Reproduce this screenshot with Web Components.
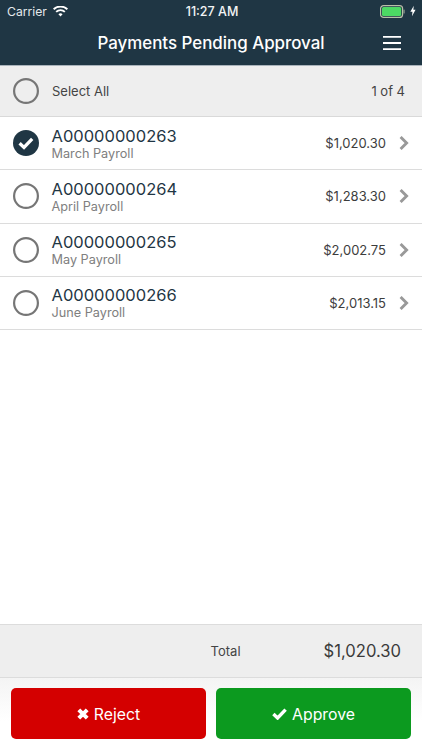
<!DOCTYPE html>
<html>
<head>
<meta charset="utf-8">
<title>Payments Pending Approval</title>
<style>
  html, body { margin: 0; height: 100%; background: #fff; }
  body { font-family: Inter, "Liberation Sans", sans-serif; overflow: hidden; }
  #app { display: flex; flex-direction: column; width: 422px; height: 750px; }
</style>
</head>
<body>
<div id="app">
  <app-header title="Payments Pending Approval"></app-header>
  <select-bar count="1 of 4"></select-bar>
  <payment-list>
    <payment-row code="A00000000263" label="March Payroll" amount="$1,020.30" checked></payment-row>
    <payment-row code="A00000000264" label="April Payroll" amount="$1,283.30"></payment-row>
    <payment-row code="A00000000265" label="May Payroll" amount="$2,002.75"></payment-row>
    <payment-row code="A00000000266" label="June Payroll" amount="$2,013.15"></payment-row>
  </payment-list>
  <total-bar amount="$1,020.30"></total-bar>
  <action-bar></action-bar>
</div>
<script>
class RoundCheck extends HTMLElement {
  constructor() {
    super();
    this.attachShadow({ mode: "open" });
    const on = this.hasAttribute("checked");
    this.shadowRoot.innerHTML = `
      <style>
        :host { display: block; width: 26px; height: 26px; flex: none; }
        svg { display: block; }
      </style>
      <svg width="26" height="26" viewBox="0 0 26 26">
        ${on
          ? `<circle cx="13" cy="13" r="13" fill="#1f3644"/><path d="M6.6 13.2l4.4 4.2 8.2-8.6" fill="none" stroke="#fff" stroke-width="3.3"/>`
          : `<circle cx="13" cy="13" r="11.9" fill="none" stroke="#767676" stroke-width="2.2"/>`}
      </svg>`;
  }
}

class AppHeader extends HTMLElement {
  constructor() {
    super();
    this.attachShadow({ mode: "open" });
    this.shadowRoot.innerHTML = `
      <style>
        :host { display: block; flex: none; height: 65px; background: #1f3644; color: #fff; border-bottom: 1px solid #a9b3bb; }
        .status { display: grid; grid-template-columns: 1fr auto 1fr; align-items: center; height: 22px; padding: 0 6px 0 7px; font-size: 12.2px; color: #e4e9ec; }
        .left { display: flex; align-items: center; gap: 6px; }
        .time { font-weight: 500; color: #f2f4f5; font-size: 12.5px; padding-left: 1px; }
        .right { display: flex; justify-content: flex-end; align-items: center; gap: 5px; }
        .nav { display: flex; justify-content: center; align-items: center; height: 42px; position: relative; }
        h1 { margin: 0; font-size: 16.9px; font-weight: 500; color: #fff; }
        .menu { position: absolute; right: 21px; top: 14px; }
        svg { display: block; }
      </style>
      <div class="status">
        <div class="left">
          <span>Carrier</span>
          <svg width="15" height="11" viewBox="0 0 15 11">
            <path d="M7.5 10.6L5.4 8.3a3 3 0 0 1 4.2 0zM3.8 6.6L2.5 5.2a7.2 7.2 0 0 1 10 0L11.2 6.6a5.3 5.3 0 0 0-7.4 0zM1.3 4L0 2.6a10.8 10.8 0 0 1 15 0L13.7 4a9 9 0 0 0-12.4 0z" fill="#fff"/>
          </svg>
        </div>
        <span class="time">11:27 AM</span>
        <div class="right">
          <svg width="25" height="13" viewBox="0 0 25 13">
            <rect x="0.6" y="0.6" width="22" height="11.8" rx="3" fill="none" stroke="#b9c0a8" stroke-width="1.2"/>
            <rect x="2" y="2" width="19.2" height="9" rx="1.6" fill="#4cd964"/>
            <rect x="23.4" y="4.5" width="1.3" height="4" rx="0.6" fill="#8b9a8f"/>
          </svg>
          <svg width="6" height="12" viewBox="0 0 7 12"><path d="M4.4 0L0.4 7h2.5L2.3 12l4.2-7.4H3.9z" fill="#fff"/></svg>
        </div>
      </div>
      <div class="nav">
        <h1>${this.getAttribute("title")}</h1>
        <svg class="menu" width="18" height="15" viewBox="0 0 18 15">
          <path d="M0 .8h18M0 7h18M0 13.2h18" stroke="#fff" stroke-width="1.8"/>
        </svg>
      </div>`;
  }
}

class SelectBar extends HTMLElement {
  constructor() {
    super();
    this.attachShadow({ mode: "open" });
    this.shadowRoot.innerHTML = `
      <style>
        :host { display: flex; flex: none; align-items: center; gap: 13px; height: 50px; padding: 0 17px 0 13px; background: #eeeeee; border-bottom: 1px solid #d9d9d9; font-size: 13px; color: #444; }
        .count { margin-left: auto; }
      </style>
      <round-check></round-check>
      <span>Select All</span>
      <span class="count">${this.getAttribute("count")}</span>`;
  }
}

class PaymentList extends HTMLElement {
  constructor() {
    super();
    this.attachShadow({ mode: "open" });
    this.shadowRoot.innerHTML = `
      <style>:host { display: block; flex: 1; background: #fff; }</style>
      <slot></slot>`;
  }
}

class PaymentRow extends HTMLElement {
  constructor() {
    super();
    this.attachShadow({ mode: "open" });
    const a = (n) => this.getAttribute(n);
    this.shadowRoot.innerHTML = `
      <style>
        :host { display: flex; align-items: center; height: 52.25px; padding: 0 13px; border-bottom: 1px solid #dcdcdc; background: #fff; }
        .text { flex: 1; display: flex; flex-direction: column; margin-left: 12.5px; }
        .code { font-size: 16.5px; line-height: 20px; color: #1f3644; }
        .label { font-size: 12.7px; line-height: 15px; color: #808080; }
        .amount { font-size: 13px; color: #3d3d3d; margin-right: 13px; }
        svg { display: block; flex: none; }
      </style>
      <round-check ${this.hasAttribute("checked") ? "checked" : ""}></round-check>
      <div class="text">
        <span class="code">${a("code")}</span>
        <span class="label">${a("label")}</span>
      </div>
      <span class="amount">${a("amount")}</span>
      <svg width="10" height="14" viewBox="0 0 10 14"><path d="M1.6 1l6 6-6 6" fill="none" stroke="#999" stroke-width="2.9"/></svg>`;
  }
}

class TotalBar extends HTMLElement {
  constructor() {
    super();
    this.attachShadow({ mode: "open" });
    this.shadowRoot.innerHTML = `
      <style>
        :host { display: flex; flex: none; align-items: center; justify-content: flex-end; height: 52px; padding: 0 21px 0 0; background: #eeeeee; border-top: 1px solid #dcdcdc; border-bottom: 1px solid #dcdcdc; }
        .t { font-size: 13px; color: #444; margin-right: 83px; }
        .v { font-size: 16.6px; color: #3a3a3a; }
      </style>
      <span class="t">Total</span>
      <span class="v">${this.getAttribute("amount")}</span>`;
  }
}

class ActionButton extends HTMLElement {
  constructor() {
    super();
    this.attachShadow({ mode: "open" });
    this.shadowRoot.innerHTML = `
      <style>
        :host { display: flex; flex: 1; align-items: center; justify-content: center; gap: 5px; height: 50px; padding-top: 1px; border-radius: 5px; color: #fff; font-size: 15.8px; background: var(--bg); }
      </style>
      <slot name="icon"></slot>
      <slot></slot>`;
  }
}

class ActionBar extends HTMLElement {
  constructor() {
    super();
    this.attachShadow({ mode: "open" });
    this.shadowRoot.innerHTML = `
      <style>
        :host { display: flex; flex: none; gap: 10px; height: 72px; box-sizing: border-box; padding: 10px 11px 11px; background: linear-gradient(#f4f4f4, #fff 60%); }
        .r { --bg: #d40000; }
        .a { --bg: #0c9a1f; }
        svg { display: block; }
      </style>
      <action-button class="r">
        <svg slot="icon" width="12" height="12" viewBox="0 0 12 12"><path d="M1.8 1.8l8.4 8.4M10.2 1.8l-8.4 8.4" stroke="#fff" stroke-width="4"/></svg>
        Reject
      </action-button>
      <action-button class="a">
        <svg slot="icon" width="15" height="12" viewBox="0 0 15 12"><path d="M1.4 6l4.2 4 8-8.4" fill="none" stroke="#fff" stroke-width="3.4"/></svg>
        Approve
      </action-button>`;
  }
}

customElements.define("round-check", RoundCheck);
customElements.define("app-header", AppHeader);
customElements.define("select-bar", SelectBar);
customElements.define("payment-list", PaymentList);
customElements.define("payment-row", PaymentRow);
customElements.define("total-bar", TotalBar);
customElements.define("action-button", ActionButton);
customElements.define("action-bar", ActionBar);
</script>
</body>
</html>
